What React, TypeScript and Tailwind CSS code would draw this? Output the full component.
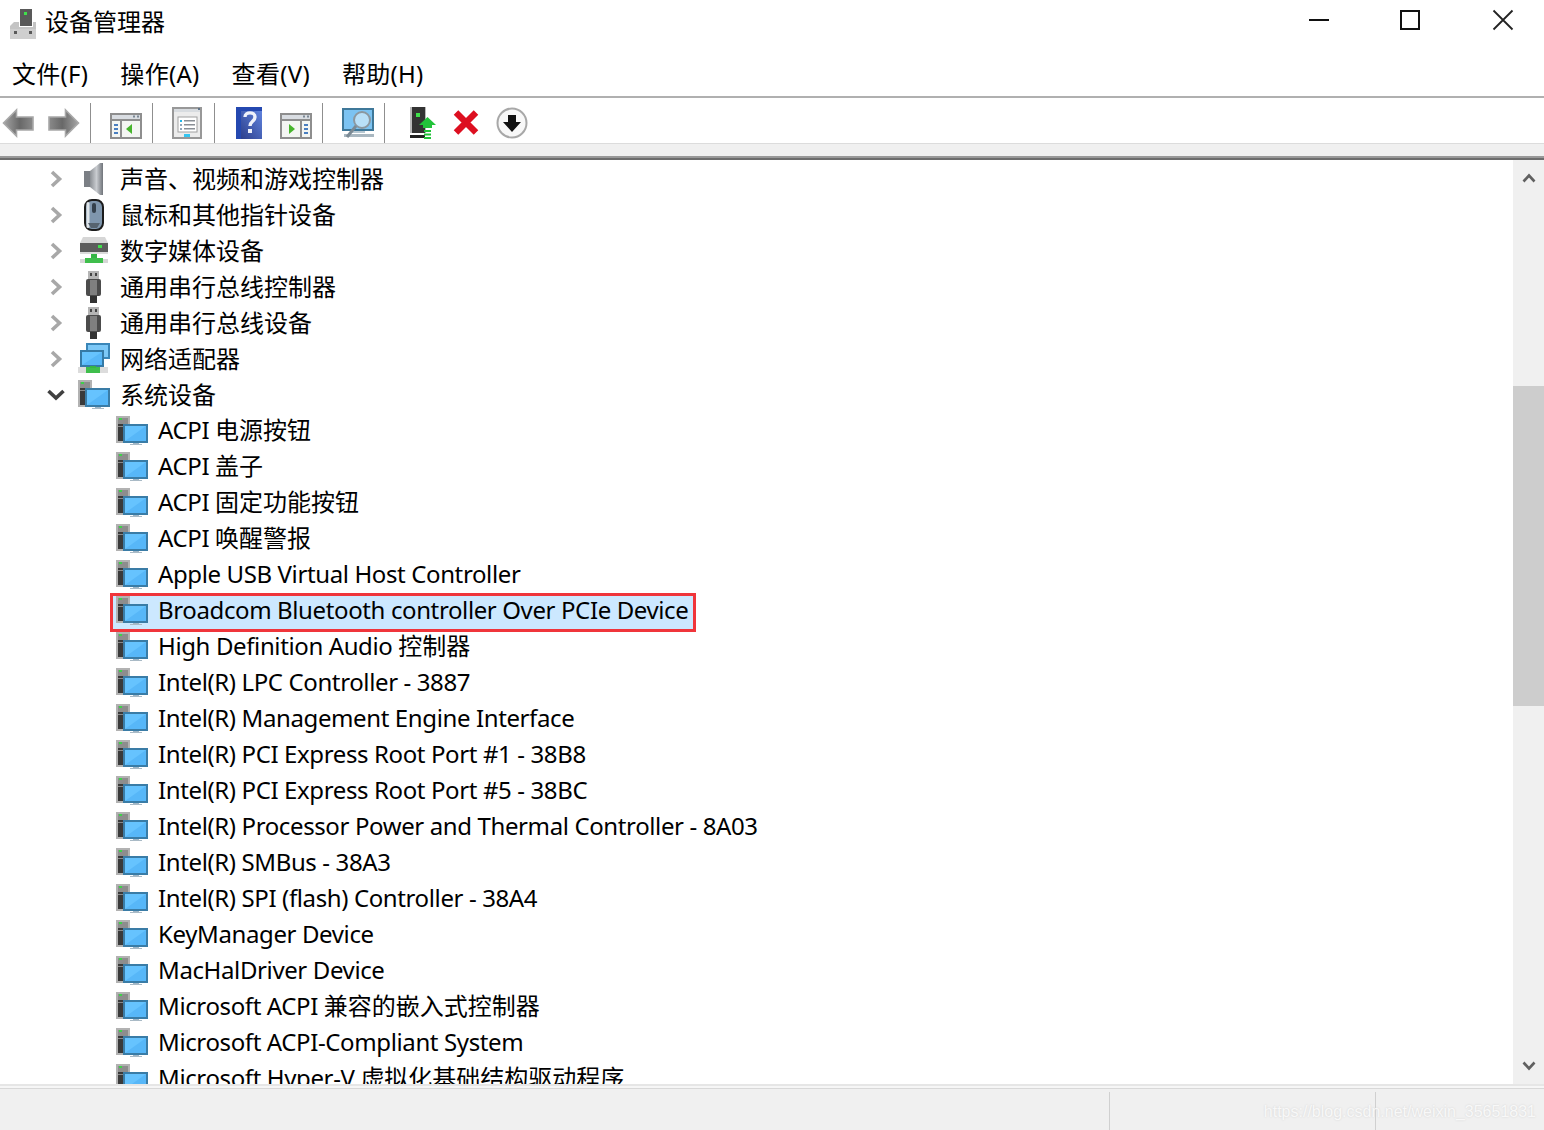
import React from "react";

const FONT = "font-['Noto_Sans','Noto_Sans_CJK_SC',sans-serif]";

function Computer() {
  return (
    <svg width="32" height="29" viewBox="0 0 32 29" className="shrink-0">
      <rect x="0" y="0" width="14" height="27" fill="#b2b2b2" />
      <rect x="2" y="2" width="10" height="23" fill="#3a3a3a" />
      <rect x="2" y="2" width="10" height="6" fill="#8d8d8d" />
      <rect x="3" y="2" width="3" height="2" fill="#3fd04a" />
      <rect x="2" y="10" width="10" height="1" fill="#8a8a8a" />
      <rect x="7" y="8" width="25" height="19" fill="#3a7ca6" />
      <rect x="9" y="10" width="21" height="15" fill="#66c3fe" />
      <path d="M9 25 L30 10 V25Z" fill="#57b7f8" />
      <rect x="17" y="27" width="6" height="1" fill="#9fb6c6" />
      <rect x="14" y="28" width="12" height="1" fill="#a9bac6" />
    </svg>
  );
}

function Speaker() {
  return (
    <svg width="34" height="34" viewBox="0 0 34 34">
      <defs>
        <linearGradient id="sp" x1="0" x2="1" y1="0" y2="0">
          <stop offset="0" stopColor="#8b8f94" />
          <stop offset="0.5" stopColor="#c9ccd0" />
          <stop offset="1" stopColor="#70747a" />
        </linearGradient>
      </defs>
      <rect x="6" y="9" width="6" height="16" fill="#7b7f85" />
      <path d="M12 9 L22 1 H25 V33 H22 L12 25Z" fill="url(#sp)" />
    </svg>
  );
}

function Mouse() {
  return (
    <svg width="34" height="34" viewBox="0 0 34 34">
      <rect x="7" y="2" width="18" height="30" rx="7" fill="#7f96ad" stroke="#1c1c1c" strokeWidth="2" />
      <rect x="8.5" y="4" width="3" height="26" rx="1.5" fill="#dfe5ea" />
      <rect x="14" y="5" width="4" height="10" rx="2" fill="#34404c" />
      <path d="M10 25 H22 L19 30 H13Z" fill="#56636f" />
    </svg>
  );
}

function Media() {
  return (
    <svg width="34" height="34" viewBox="0 0 34 34">
      <path d="M5 3 H27 L30 9 H2Z" fill="#d6d6d6" />
      <rect x="2" y="9" width="28" height="9" fill="#5c5c5c" />
      <rect x="2" y="18" width="28" height="2" fill="#dadada" />
      <rect x="20" y="11" width="4" height="3" fill="#3fe04a" />
      <rect x="13" y="20" width="6" height="5" fill="#35b545" />
      <rect x="7" y="24" width="18" height="5" fill="#3fbe4c" />
      <rect x="2" y="25" width="5" height="4" fill="#d6d6d6" />
      <rect x="25" y="25" width="5" height="4" fill="#d6d6d6" />
    </svg>
  );
}

function Usb() {
  return (
    <svg width="34" height="34" viewBox="0 0 34 34">
      <rect x="10" y="1" width="11" height="9" fill="#b5b5b5" />
      <rect x="12" y="3" width="2" height="3" fill="#444" />
      <rect x="17" y="3" width="2" height="3" fill="#444" />
      <rect x="8" y="9" width="15" height="17" rx="2" fill="#4c4c4c" />
      <rect x="12" y="10" width="7" height="15" fill="#808080" />
      <rect x="12" y="26" width="7" height="7" fill="#333" />
    </svg>
  );
}

function Network() {
  return (
    <svg width="34" height="34" viewBox="0 0 34 34">
      <rect x="8" y="1" width="24" height="16" fill="#3a86b8" />
      <rect x="10" y="3" width="20" height="12" fill="#7cc8f7" />
      <rect x="2" y="8" width="24" height="17" fill="#357aa6" />
      <rect x="4" y="10" width="20" height="13" fill="#66c3fe" />
      <path d="M4 23 L24 10 V23Z" fill="#57b7f8" />
      <rect x="0" y="25" width="30" height="6" fill="#dcdcdc" />
      <rect x="8" y="25" width="14" height="6" fill="#3fbe4c" />
      <rect x="12" y="24" width="6" height="2" fill="#35b545" />
    </svg>
  );
}

function Chevron({ open }: { open?: boolean }) {
  return open ? (
    <svg width="20" height="14" viewBox="0 0 20 14">
      <path d="M2.5 3 L10 10 L17.5 3" fill="none" stroke="#404040" strokeWidth="3.6" />
    </svg>
  ) : (
    <svg width="14" height="20" viewBox="0 0 14 20">
      <path d="M3 3 L10.5 10 L3 17" fill="none" stroke="#a8a8a8" strokeWidth="3.6" />
    </svg>
  );
}

function ToolArrow({ right }: { right?: boolean }) {
  return (
    <svg width="32" height="30" viewBox="0 0 32 30" className={right ? "-scale-x-100" : ""}>
      <defs>
        <linearGradient id="ar" x1="0" x2="1" y1="0" y2="0">
          <stop offset="0" stopColor="#a5a5a5" />
          <stop offset="0.55" stopColor="#686868" />
          <stop offset="1" stopColor="#8a8a8a" />
        </linearGradient>
      </defs>
      <path d="M1.5 15 L14.5 2 V9 H31 V22 H14.5 V28Z" fill="url(#ar)" stroke="#a8a8a8" strokeWidth="1.6" />
    </svg>
  );
}

function PanelIcon({ right }: { right?: boolean }) {
  return (
    <svg width="32" height="26" viewBox="0 0 32 26" className="mt-1.5">
      <rect x="1" y="1" width="30" height="24" fill="#f4f6f3" stroke="#8e8e8e" strokeWidth="2" />
      <rect x="2" y="2" width="28" height="4" fill="#d9dde2" />
      <rect x="23" y="2.5" width="2" height="2" fill="#7a8794" />
      <rect x="27" y="2.5" width="2" height="2" fill="#7a8794" />
      <rect x="2" y="6" width="28" height="2" fill="#8e8e8e" />
      {right ? (
        <>
          <path d="M9 11 L15 16 L9 21Z" fill="#47b52d" />
          <rect x="20" y="8" width="2" height="16" fill="#8e8e8e" />
          <rect x="24" y="11" width="4" height="2" fill="#4a7fc0" />
          <rect x="24" y="15" width="4" height="2" fill="#4a7fc0" />
          <rect x="24" y="19" width="4" height="2" fill="#4a7fc0" />
        </>
      ) : (
        <>
          <rect x="10" y="8" width="2" height="16" fill="#8e8e8e" />
          <rect x="4" y="11" width="4" height="2" fill="#4a7fc0" />
          <rect x="4" y="15" width="4" height="2" fill="#4a7fc0" />
          <rect x="4" y="19" width="4" height="2" fill="#4a7fc0" />
          <path d="M22 11 L16 16 L22 21Z" fill="#47b52d" />
        </>
      )}
    </svg>
  );
}

function PropsIcon() {
  return (
    <svg width="30" height="32" viewBox="0 0 30 32">
      <rect x="1" y="1" width="28" height="30" fill="#ececec" stroke="#989898" strokeWidth="2" />
      <rect x="2" y="2" width="26" height="3" fill="#d8dce0" />
      <rect x="26" y="1" width="2" height="2" fill="#5f7388" />
      <rect x="6" y="10" width="19" height="15" fill="#fff" stroke="#a0a0a0" />
      <rect x="8" y="13" width="2" height="2" fill="#22b8ea" />
      <rect x="12" y="13" width="11" height="1.5" fill="#8a8f96" />
      <rect x="8" y="17" width="2" height="2" fill="#8fa6bb" />
      <rect x="12" y="17" width="11" height="1.5" fill="#8a8f96" />
      <rect x="8" y="21" width="2" height="2" fill="#8fa6bb" />
      <rect x="12" y="21" width="11" height="1.5" fill="#8a8f96" />
      <rect x="12" y="27" width="6" height="3" fill="#35c5f0" />
    </svg>
  );
}

function HelpIcon() {
  return (
    <svg width="26" height="32" viewBox="0 0 26 32">
      <defs>
        <linearGradient id="hp" x1="0" x2="1" y1="1" y2="0">
          <stop offset="0" stopColor="#2c3f8c" />
          <stop offset="1" stopColor="#5f82dd" />
        </linearGradient>
      </defs>
      <rect width="26" height="32" fill="#2448b0" />
      <rect x="5" y="4" width="21" height="28" fill="url(#hp)" />
      <path d="M9 10 C9 4.5 19 4.5 19 10 C19 14.5 14 14 14 19" fill="none" stroke="#eef1fa" strokeWidth="3.4" />
      <rect x="12" y="22" width="4" height="4" fill="#eef1fa" />
    </svg>
  );
}

function ScanIcon() {
  return (
    <svg width="32" height="30" viewBox="0 0 32 30">
      <rect x="1" y="1" width="30" height="21" fill="#7cc3f2" stroke="#3f7899" strokeWidth="2" />
      <rect x="9" y="23" width="14" height="2" fill="#b7c8d2" />
      <rect x="2" y="26" width="30" height="3" fill="#a9b7c0" />
      <circle cx="20" cy="12" r="8" fill="#b9e0f8" stroke="#8c98a0" strokeWidth="2" />
      <path d="M14 18 L5 29" stroke="#7c8a94" strokeWidth="3" />
    </svg>
  );
}

function UpdateIcon() {
  return (
    <svg width="26" height="32" viewBox="0 0 26 32">
      <rect x="0" y="0" width="16" height="26" fill="#b9b9b9" />
      <rect x="2" y="0" width="13" height="26" fill="#333" />
      <rect x="6" y="6" width="4" height="4" fill="#3fe04a" />
      <rect x="0" y="28" width="15" height="3" fill="#222" />
      <path d="M9 18 L17.5 10 L26 18 H22 V21 H13 V18Z" fill="#22c33a" />
      <rect x="14" y="23" width="7" height="2" fill="#22c33a" />
      <rect x="14" y="26.500" width="7" height="2" fill="#22c33a" />
      <rect x="14" y="30" width="7" height="2" fill="#22c33a" />
    </svg>
  );
}

function RedX() {
  return (
    <svg width="26" height="27" viewBox="0 0 26 27">
      <path d="M3 3.500 L23 23.500 M23 3.500 L3 23.500" stroke="#dd0f20" strokeWidth="6.4" />
    </svg>
  );
}

function DownCircle() {
  return (
    <svg width="32" height="32" viewBox="0 0 32 32">
      <circle cx="16" cy="16" r="14.5" fill="#f8f8f8" stroke="#a8a8a8" strokeWidth="2" />
      <path d="M12 8 H20 V15 H25 L16 25 L7 15 H12Z" fill="#111" />
    </svg>
  );
}

function AppIcon() {
  return (
    <svg width="28" height="30" viewBox="0 0 28 30">
      <rect x="11" y="0" width="12" height="17" fill="#595959" />
      <rect x="15" y="3" width="3" height="3" fill="#3fe04a" />
      <path d="M5 13 H10 V18 H24 V13 H27 V30 H1 V17Z" fill="#c4c4c4" />
      <rect x="1" y="20" width="26" height="10" fill="#cfcfcf" />
      <rect x="5" y="22" width="3" height="3" fill="#5a5a5a" />
      <rect x="20" y="22" width="3" height="3" fill="#5a5a5a" />
    </svg>
  );
}

const Sep = () => <div className="w-px h-10 bg-[#8f8f8f] shrink-0" />;

const rows: { icon: React.ReactNode; text: string; open?: boolean; child?: boolean; sel?: boolean }[] = [
  { icon: <Speaker />, text: "声音、视频和游戏控制器" },
  { icon: <Mouse />, text: "鼠标和其他指针设备" },
  { icon: <Media />, text: "数字媒体设备" },
  { icon: <Usb />, text: "通用串行总线控制器" },
  { icon: <Usb />, text: "通用串行总线设备" },
  { icon: <Network />, text: "网络适配器" },
  { icon: <Computer />, text: "系统设备", open: true },
  ...[
    "ACPI 电源按钮",
    "ACPI 盖子",
    "ACPI 固定功能按钮",
    "ACPI 唤醒警报",
    "Apple USB Virtual Host Controller",
    "Broadcom Bluetooth controller Over PCIe Device",
    "High Definition Audio 控制器",
    "Intel(R) LPC Controller - 3887",
    "Intel(R) Management Engine Interface",
    "Intel(R) PCI Express Root Port #1 - 38B8",
    "Intel(R) PCI Express Root Port #5 - 38BC",
    "Intel(R) Processor Power and Thermal Controller - 8A03",
    "Intel(R) SMBus - 38A3",
    "Intel(R) SPI (flash) Controller - 38A4",
    "KeyManager Device",
    "MacHalDriver Device",
    "Microsoft ACPI 兼容的嵌入式控制器",
    "Microsoft ACPI-Compliant System",
    "Microsoft Hyper-V 虚拟化基础结构驱动程序",
  ].map((text) => ({
    icon: <Computer />,
    text,
    child: true,
    sel: text.startsWith("Broadcom"),
  })),
];

function Mixed({ text }: { text: string }) {
  const parts = text.split(/([\u4e00-\u9fff]+)/).filter(Boolean);
  return (
    <span className="pl-1 leading-8 -mt-0.5 whitespace-pre">
      {parts.map((p, i) =>
        /[\u4e00-\u9fff]/.test(p) ? (
          <span key={i}>{p}</span>
        ) : (
          <span key={i} className="tracking-[-0.38px]">{p}</span>
        ),
      )}
    </span>
  );
}

function Row({ r }: { r: (typeof rows)[number] }) {
  if (r.child) {
    return (
      <div className={`h-9 ml-[110px] w-[586px] flex items-center pl-1.5 ${r.sel ? "bg-[#cce8ff]" : ""}`}>
        <div className="w-[38px] shrink-0 flex justify-start -mt-0.5">
          <Computer />
        </div>
        <Mixed text={r.text} />
      </div>
    );
  }
  return (
    <div className="h-9 flex items-center pl-[46px]">
      <div className="w-5 flex justify-center shrink-0">
        <Chevron open={r.open} />
      </div>
      <div className={`w-[38px] ml-3 shrink-0 flex justify-start ${r.open ? "-mt-0.5" : ""}`}>{r.icon}</div>
      <span className="pl-1 leading-8 whitespace-pre">{r.text}</span>
    </div>
  );
}

export default function App() {
  return (
    <div className={`w-[1544px] h-[1130px] bg-white overflow-hidden flex flex-col text-black ${FONT}`}>
      <header className="h-12 shrink-0 flex items-center">
        <div className="ml-[9px] mr-2 flex">
          <AppIcon />
        </div>
        <span className="text-2xl leading-none -mt-1">设备管理器</span>
        <div className="ml-auto flex items-center -mt-2">
          <svg width="20" height="20" viewBox="0 0 20 20" className="mr-[71px]">
            <rect y="9" width="20" height="2" fill="#111" />
          </svg>
          <svg width="20" height="20" viewBox="0 0 20 20" className="mr-[72px]">
            <rect x="1" y="1" width="18" height="18" fill="none" stroke="#111" strokeWidth="2" />
          </svg>
          <svg width="22" height="22" viewBox="0 0 22 22" className="mr-[30px]">
            <path d="M1.5 1.5 L20.5 20.5 M20.5 1.5 L1.5 20.5" stroke="#222" strokeWidth="1.8" />
          </svg>
        </div>
      </header>
      <nav className="h-12 shrink-0 flex items-center gap-8 pl-3 pt-1 text-2xl leading-none tracking-[0.3px]">
        <span>文件(F)</span>
        <span>操作(A)</span>
        <span>查看(V)</span>
        <span>帮助(H)</span>
      </nav>
      <div className="h-[48px] shrink-0 border-t-2 border-[#b0b0b0] border-b border-b-[#dcdcdc] flex items-center pt-1">
        <div className="flex items-center pl-0.5 gap-3.5 w-[90px] shrink-0"><ToolArrow /><ToolArrow right /></div>
        <Sep />
        <div className="w-[61px] shrink-0 pl-[19px] flex"><PanelIcon /></div>
        <Sep />
        <div className="w-[61px] shrink-0 pl-[19px] flex"><PropsIcon /></div>
        <Sep />
        <div className="w-[107px] shrink-0 flex gap-[18px] pl-[21px]"><HelpIcon /><PanelIcon right /></div>
        <Sep />
        <div className="w-[61px] shrink-0 pl-[19px] flex"><ScanIcon /></div>
        <Sep />
        <div className="flex items-center pl-[25px] gap-[17px]"><UpdateIcon /><RedX /><DownCircle /></div>
      </div>
      <div className="h-[12px] shrink-0 bg-[#f0f0f0]" />
      <div className="h-1 shrink-0 bg-[#6d6d6d] border-t-2 border-[#999999]" />
      <main className="flex-1 min-h-0 flex">
        <div className="relative flex-1 min-w-0 overflow-hidden pt-px text-2xl">
          {rows.map((r) => (
            <Row key={r.text} r={r} />
          ))}
          <div className="absolute left-[110px] top-[433px] w-[586px] h-[39px] border-[3px] border-[#f0353b] pointer-events-none" />
        </div>
        <aside className="w-[31px] shrink-0 bg-[#f0f0f0] flex flex-col">
          <div className="h-[226px] flex justify-center pt-3">
            <svg width="14" height="12" viewBox="0 0 14 12"><path d="M1.5 9.5 L7 3.5 L12.5 9.5" fill="none" stroke="#606060" strokeWidth="2.6" /></svg>
          </div>
          <div className="h-[320px] bg-[#cdcdcd]" />
          <div className="flex-1 flex items-end justify-center pb-3">
            <svg width="14" height="12" viewBox="0 0 14 12"><path d="M1.5 2.5 L7 8.5 L12.5 2.5" fill="none" stroke="#606060" strokeWidth="2.6" /></svg>
          </div>
        </aside>
      </main>
      <footer className="relative h-[46px] shrink-0 bg-[#f0f0f0] flex flex-col">
        <div className="h-0.5 shrink-0 bg-[#e6e6e6]" />
        <div className="h-0.5 shrink-0 bg-[#f6f6f6]" />
        <div className="h-px shrink-0 bg-[#d8d8d8]" />
        <div className="flex-1 flex mt-[3px]">
          <div className="w-[1109px]" />
          <div className="w-[266px] border-l border-[#d0d0d0]" />
          <div className="flex-1 border-l border-[#d0d0d0]" />
        </div>
        <span className="absolute right-[8px] top-[18px] text-base leading-5 text-[#f8f8f8] font-['Liberation_Sans',sans-serif] [text-shadow:0_0_2px_#d0d0d0]">
          https://blog.csdn.net/weixin_35651831
        </span>
      </footer>
    </div>
  );
}
